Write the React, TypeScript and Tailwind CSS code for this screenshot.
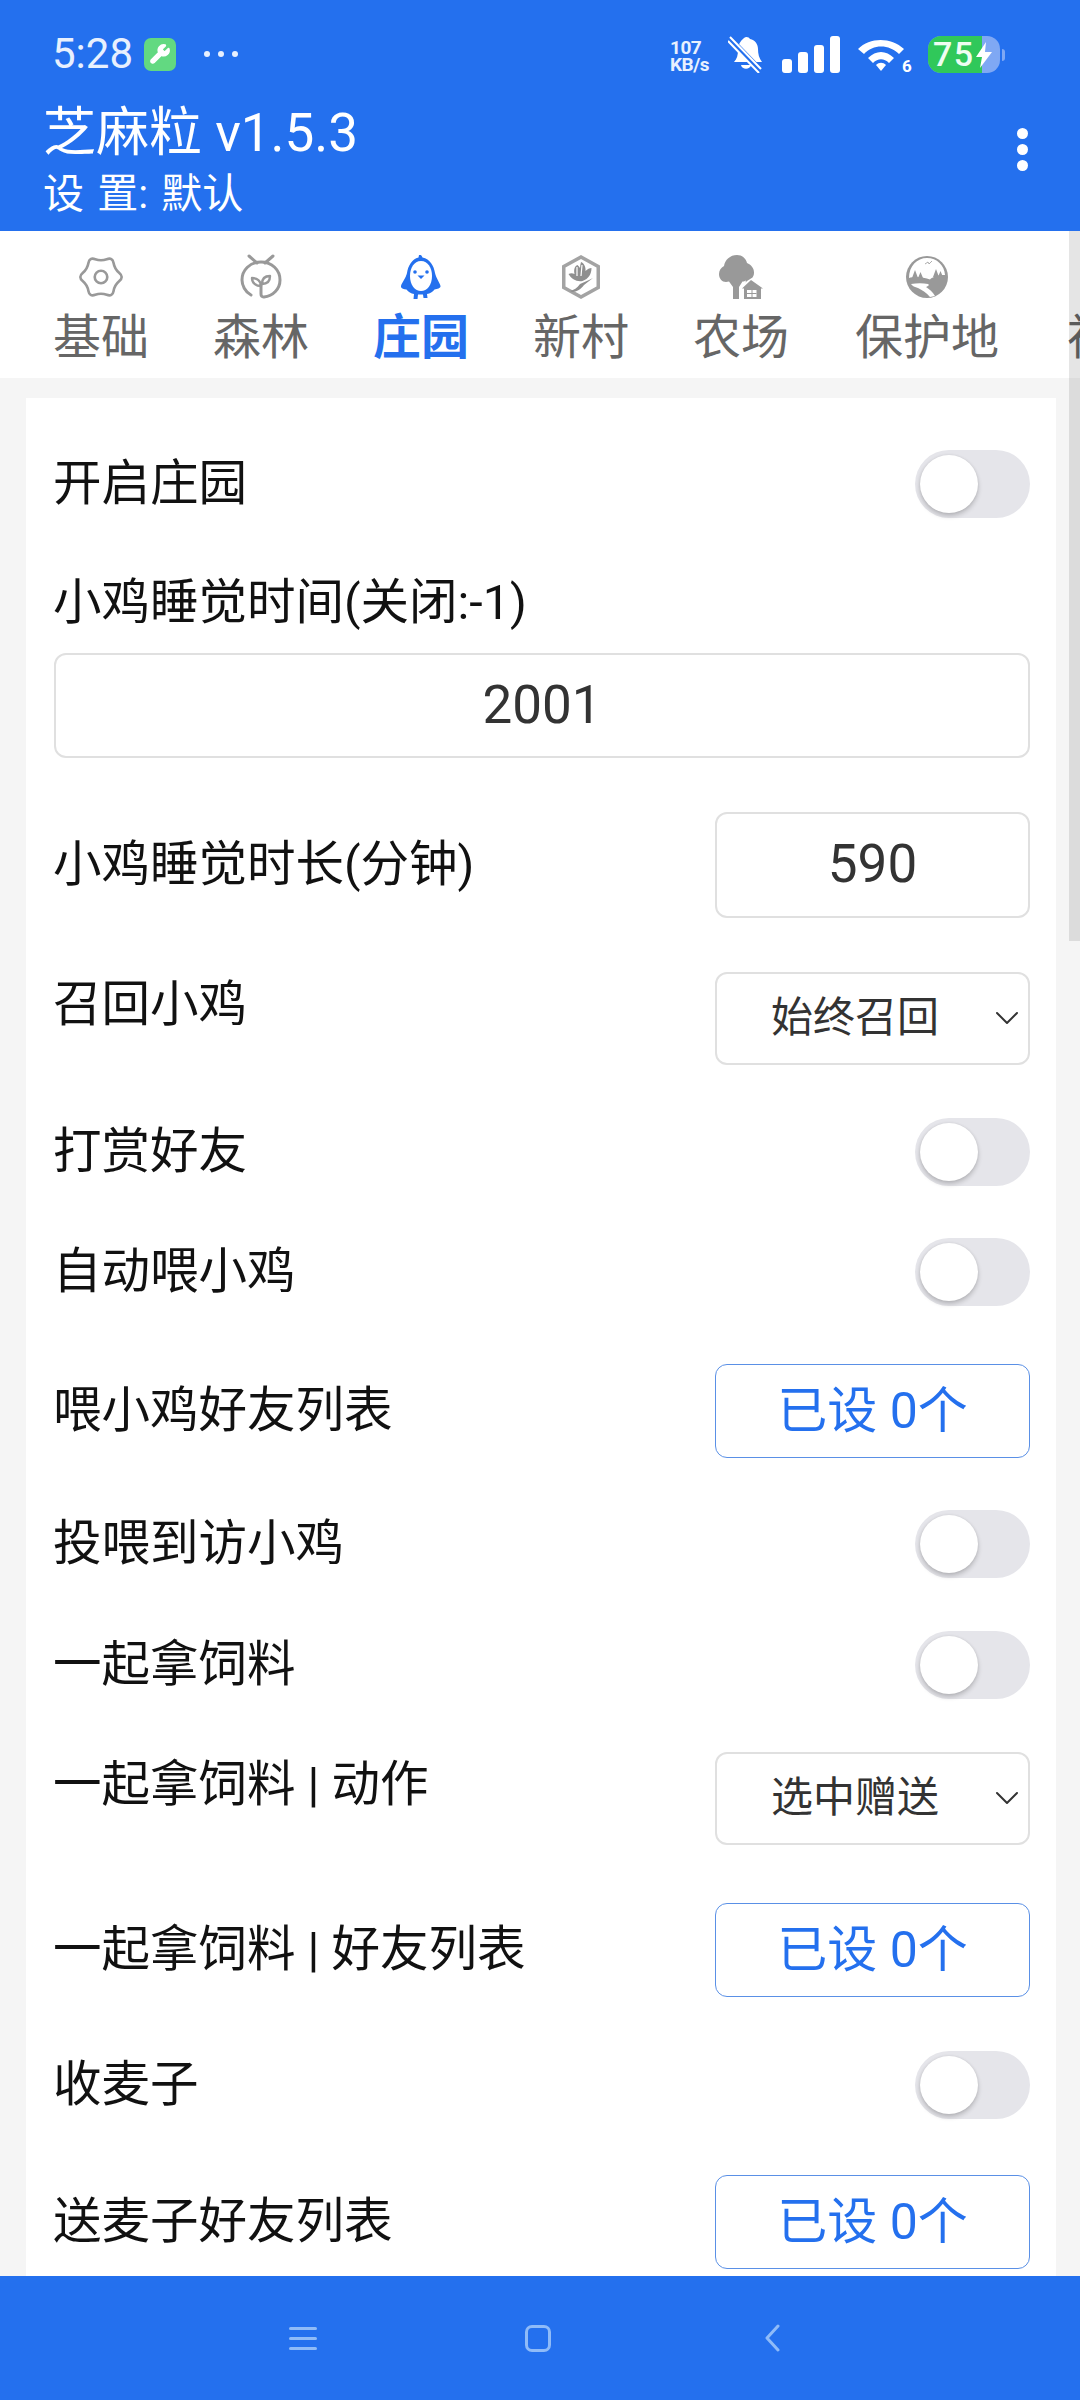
import type { ReactNode } from 'react'
import { ChevronDown, Wrench } from 'lucide-react'

const FONT = "font-['Roboto','Noto_Sans_CJK_SC',sans-serif]"

function GearIcon() {
  return (
    <svg width="44" height="44" viewBox="1 1 42 42" fill="none" stroke="#999" strokeWidth="2.5" strokeLinejoin="round">
      <path d="M27.500 5Q33 3 34 8.700Q35 14.500 39.500 18.250Q44 22 39.500 25.750Q35 29.500 34 35.300Q33 41 27.500 39Q22 37 16.500 39Q11 41 10 35.300Q9 29.500 4.500 25.750Q0 22 4.500 18.250Q9 14.500 10 8.700Q11 3 16.500 5Q22 7 27.500 5z" />
      <circle cx="22" cy="22" r="6" />
    </svg>
  )
}

function SproutIcon() {
  return (
    <svg width="44" height="46" viewBox="0 0 44 46" fill="none" stroke="#999" strokeWidth="3" strokeLinecap="round" strokeLinejoin="round">
      <path d="M10 2l8 7M34 2l-8 7" />
      <path d="M12 41C6 38 3 31 3 26c0-10 8-18 19-18s19 8 19 18c0 9-7 16-16 17-2 .2-3-1-3-3v-9" />
      <path d="M22 32c0-5-4-8-9-8 0 5 4 8 9 8zM23 30c0-5 3-8 8-8 0 5-3 8-8 8z" strokeWidth="2.400" />
    </svg>
  )
}

function ChickIcon() {
  return (
    <svg width="40" height="44" viewBox="0 0 40 44">
      <path d="M18 0c2-.5 3 1 3.500 2.500C29 4 33 11 34 18c1 5 5 10 5.500 13 .3 2.500-3 3-6 3.500-2 2.500-4.500 4-7.500 4.500l.5 4h-4l-.5-3.500h-5L16.500 44h-4l.5-5c-3-.5-5.500-2-7.500-4.500-3-.5-6-1-5.500-3.500C.5 28 5 23 6 18 7 11 11 4 17.500 2.500z" fill="#2470ee" />
      <path d="M20 6c7 0 11 7 11 15 0 9-5 15-11 15S9 30 9 21C9 13 13 6 20 6z" fill="#fff" />
      <circle cx="14" cy="17" r="1.800" fill="#2470ee" />
      <circle cx="26" cy="17" r="1.800" fill="#2470ee" />
      <path d="M16.500 20.500h7L20 24z" fill="#2470ee" />
    </svg>
  )
}

function FlowerIcon() {
  return (
    <svg width="38" height="44" viewBox="0 0 38 44">
      <path d="M19 0l19 10.500v23L19 44 0 33.500v-23z" fill="#a3a3a3" />
      <path d="M19 4l15.500 8.500v19L19 40 3.500 31.500v-19z" fill="#fff" />
      <path d="M19 7c3 1 5 5 4.500 9 2-2 4-3 6-3 0 6-3 11-9 13-6 1-11-2-14-7 2-1 4-1 6 0-1-4 0-8 3-9 1 1 2 2 2.500 3 0-2 .5-4 1-6z" fill="#8f8f8f" />
      <path d="M8 36c4-1 7-3 10-7l9-4 4-2-9 7c-3 4-7 7-12 7z" fill="#8f8f8f" />
      <path d="M15 12v9M20 10l-1 11" stroke="#fff" strokeWidth="1.200" />
    </svg>
  )
}

function TreeIcon() {
  return (
    <svg width="44" height="44" viewBox="0 0 44 44" fill="#999">
      <path d="M18 0c5 0 9 3.500 10 8 4 1.500 7 5 7 9.500 0 2-.5 3.500-1.500 5L28 26l-1.500 1.500 .5-2c-1 .5-2 1-3.500 1L20 32v12h-6V32l-4-5.500c-1 .3-2 .4-3 .4-4 0-7-3.500-7-8 0-3.500 2-6.500 5-8C6 5 11 0 18 0z" />
      <path d="M32 25l12 8.500h-2V44H25V33.500h-2z" />
      <path d="M28 35h9.500v7H28z" fill="#fff" />
      <path d="M32.500 35h1v7h-1zM28 38h9.500v1H28z" />
    </svg>
  )
}

function LandscapeIcon() {
  return (
    <svg width="44" height="44" viewBox="0 0 44 44">
      <circle cx="22" cy="22" r="21" fill="#999" />
      <path d="M22 3c10 0 17.500 7.500 18 17-6 0-13 2-15 4.500C19 22 9 21 4 23 4 11 12 3 22 3z" fill="#fff" />
      <path d="M7 23l3-8 3 8zM13 23l2.500-6 2.500 6zM28 22l3-8 3 8zM33 22l2.500-6 2.500 6z" fill="#999" />
      <path d="M20 9l3-2 1 2 3-3" stroke="#999" strokeWidth=".8" fill="none" />
      <path d="M6 29c6-1 12-1 17 0 2 1 0 2-2 3 3 2 7 5 9 9l-5 1c-3-4-8-7-12-9-3-1-6-2-7-4z" fill="#fff" />
    </svg>
  )
}

const TABS: { label: string; icon: ReactNode; active?: boolean; w: string }[] = [
  { label: '基础', icon: <GearIcon />, w: 'w-[160px]' },
  { label: '森林', icon: <SproutIcon />, w: 'w-[160px]' },
  { label: '庄园', icon: <ChickIcon />, active: true, w: 'w-[160px]' },
  { label: '新村', icon: <FlowerIcon />, w: 'w-[160px]' },
  { label: '农场', icon: <TreeIcon />, w: 'w-[160px]' },
  { label: '保护地', icon: <LandscapeIcon />, w: 'w-[212px]' },
  { label: '神奇物种', icon: null, w: 'w-[260px]' },
]

function StatusBar() {
  return (
    <div className="flex h-[73px] items-end justify-between pl-[52px] pr-[75px]">
      <div className="flex items-center">
        <span className="text-[42px] leading-[38px] text-[#e8f0fe]">5:28</span>
        <span className="ml-[11px] flex h-[33px] w-[32px] items-center justify-center rounded-[7px] bg-[#62d981]">
          <Wrench size={22} fill="#fff" stroke="#fff" strokeWidth={1.5} />
        </span>
        <span className="ml-[28px] flex gap-[8px]">
          <i className="h-[6px] w-[6px] rounded-full bg-[#e8f0fe]" />
          <i className="h-[6px] w-[6px] rounded-full bg-[#e8f0fe]" />
          <i className="h-[6px] w-[6px] rounded-full bg-[#e8f0fe]" />
        </span>
      </div>
      <div className="flex items-end">
        <div className="flex w-[50px] flex-col text-[19px] font-bold leading-[17px] tracking-[-0.5px] text-[#e8f0fe]">
          <span>107</span>
          <span className="whitespace-nowrap">KB/s</span>
        </div>
        <svg className="ml-[8px]" width="36" height="37" viewBox="0 0 36 37" fill="#fff">
          <path d="M16 2c2-2 5-1 6 1 5 1 8 5 8 10 0 5 1 9 4 13H6c3-3 4-7 4-12 0-5 2-9 6-12z" />
          <path d="M13 29h10c-1 5-9 5-10 0z" />
          <path d="M2 3l31 32" stroke="#2470ee" strokeWidth="6" />
          <path d="M2 1l31 32M0 5l31 32" stroke="#fff" strokeWidth="2" />
        </svg>
        <div className="ml-[18px] flex items-end gap-[6px]">
          <i className="h-[14px] w-[10px] rounded-[3px] bg-white" />
          <i className="h-[21px] w-[10px] rounded-[3px] bg-white" />
          <i className="h-[28px] w-[10px] rounded-[3px] bg-white" />
          <i className="h-[37px] w-[10px] rounded-[3px] bg-white" />
        </div>
        <svg className="ml-[18px]" width="56" height="37" viewBox="0 0 56 37" fill="#fff">
          <path d="M0 13C12 1 33 1 46 13l-5 5C31 8 15 8 6 18z" />
          <path d="M10 22c8-8 18-8 26 0l-5 5c-5-5-11-5-16 0z" />
          <path d="M18 29c3-3 7-3 10 0l-5 6z" />
          <text x="44" y="36" fontSize="17" fontWeight="700" fontFamily="Roboto">6</text>
        </svg>
        <div className="relative ml-[14px] flex h-[37px] w-[72px] items-center overflow-hidden rounded-[13px] bg-[#7fa8f4]">
          <div className="h-full w-[54px] bg-[#30c85a]" />
          <span className="absolute left-[5px] text-[34px] font-medium leading-[37px] tracking-[1.5px] text-[#eefdf2]">75</span>
          <svg className="absolute left-[48px]" width="16" height="26" viewBox="0 0 16 26" fill="#fff">
            <path d="M10 0L0 15h6l-2 11 12-16H9z" />
          </svg>
        </div>
        <i className="mb-[12px] ml-[2px] h-[12px] w-[3px] rounded-r-full bg-[#7fa8f4]" />
      </div>
    </div>
  )
}

function Header() {
  return (
    <div className="h-[231px] bg-[#2470ee] text-white">
      <StatusBar />
      <div className="relative pl-[43px] pt-[31px]">
        <div className="whitespace-nowrap text-[53px] leading-[58px]">芝麻粒 v1.5.3</div>
        <div className="mt-[9px] whitespace-pre text-[41px] leading-[46px] [word-spacing:3px]">设 置: 默认</div>
        <div className="absolute right-[33px] top-[55px] flex w-[50px] flex-col items-center gap-[5px]">
          <i className="h-[11px] w-[11px] rounded-full bg-white" />
          <i className="h-[11px] w-[11px] rounded-full bg-white" />
          <i className="h-[11px] w-[11px] rounded-full bg-white" />
        </div>
      </div>
    </div>
  )
}

function TabBar() {
  return (
    <div className="flex h-[147px] overflow-hidden bg-white pl-[21px]">
      {TABS.map(t => (
        <div key={t.label} className={`flex shrink-0 flex-col items-center ${t.w}`}>
          <div className="mt-[24px] flex h-[44px] items-center justify-center">{t.icon}</div>
          <span className={t.active ? 'mt-[9px] whitespace-nowrap text-[48px] font-bold leading-[60px] text-[#2470ee]' : 'mt-[9px] whitespace-nowrap text-[48px] leading-[60px] text-[#666]'}>
            {t.label}
          </span>
        </div>
      ))}
    </div>
  )
}

function Label({ children, className = '' }: { children: ReactNode; className?: string }) {
  return <span className={`whitespace-nowrap text-[48.5px] leading-[66px] text-[#111] ${className}`}>{children}</span>
}

function Toggle() {
  return (
    <div className="relative h-[68px] w-[115px] rounded-full bg-[#e5e5ea]">
      <div className="absolute left-[5px] top-[5px] h-[58px] w-[58px] rounded-full bg-white shadow-[0_3px_5px_rgba(0,0,0,0.2),0_0_3px_rgba(0,0,0,0.08)]" />
    </div>
  )
}

function ToggleRow({ label, mt }: { label: string; mt: string }) {
  return (
    <div className={`flex items-center justify-between ${mt}`}>
      <Label>{label}</Label>
      <Toggle />
    </div>
  )
}

function NumberBox({ value, className }: { value: string; className: string }) {
  return (
    <div className={`flex items-center justify-center rounded-[12px] border-2 border-[#e0e0e0] text-[53px] text-[#333] ${className}`}>
      {value}
    </div>
  )
}

function SelectRow({ label, value, mt }: { label: string; value: string; mt: string }) {
  return (
    <div className={`flex items-start justify-between ${mt}`}>
      <Label>{label}</Label>
      <div className="relative h-[93px] w-[315px] overflow-hidden rounded-[12px] border-2 border-[#e0e0e0]">
        <div className="h-[62px] overflow-hidden pl-[54px] pt-[20px] text-[42px] leading-[48px] text-[#333]">{value}</div>
        <ChevronDown className="absolute right-[1px] top-[24px]" size={40} strokeWidth={1.2} color="#333" />
      </div>
    </div>
  )
}

function FriendsRow({ label, mt }: { label: string; mt: string }) {
  return (
    <div className={`flex items-center justify-between ${mt}`}>
      <Label>{label}</Label>
      <div className="flex h-[94px] w-[315px] items-center justify-center rounded-[12px] border border-[#5a90e6] text-[50px] text-[#2470ee]">
        已设 0个
      </div>
    </div>
  )
}

function NavBar() {
  return (
    <div className="relative flex h-[124px] items-center bg-[#2470ee] pl-[289px]">
      <div className="flex w-[28px] flex-col gap-[7px]">
        <i className="h-[3px] rounded-full bg-[#8fbbf8]" />
        <i className="h-[3px] rounded-full bg-[#8fbbf8]" />
        <i className="h-[3px] rounded-full bg-[#8fbbf8]" />
      </div>
      <div className="ml-[208px] h-[27px] w-[26px] rounded-[7px] border-[3px] border-[#8fbbf8]" />
      <svg className="ml-[213px]" width="17" height="28" viewBox="0 0 17 28" fill="none" stroke="#8fbbf8" strokeWidth="3" strokeLinecap="round" strokeLinejoin="round">
        <path d="M14 2L3 14l11 12" />
      </svg>
    </div>
  )
}

export default function App() {
  return (
    <div className={`relative flex h-[2400px] w-[1080px] flex-col overflow-hidden bg-[#f5f5f5] ${FONT}`}>
      <Header />
      <TabBar />
      <div className="h-[1898px] overflow-hidden pl-[26px] pr-[24px] pt-[20px]">
        <div className="h-[1900px] bg-white pl-[27px] pr-[26px] pt-[52px]">
          <ToggleRow label="开启庄园" mt="mt-0" />
          <div className="mt-[52px]">
            <Label className="block">小鸡睡觉时间(关闭:-1)</Label>
            <NumberBox value="2001" className="ml-[1px] mt-[17px] h-[105px]" />
          </div>
          <div className="mt-[54px] flex items-center justify-between">
            <Label>小鸡睡觉时长(分钟)</Label>
            <NumberBox value="590" className="h-[106px] w-[315px]" />
          </div>
          <SelectRow label="召回小鸡" value="始终召回" mt="mt-[54px]" />
          <ToggleRow label="打赏好友" mt="mt-[53px]" />
          <ToggleRow label="自动喂小鸡" mt="mt-[52px]" />
          <FriendsRow label="喂小鸡好友列表" mt="mt-[58px]" />
          <ToggleRow label="投喂到访小鸡" mt="mt-[52px]" />
          <ToggleRow label="一起拿饲料" mt="mt-[53px]" />
          <SelectRow label="一起拿饲料 | 动作" value="选中赠送" mt="mt-[53px]" />
          <FriendsRow label="一起拿饲料 | 好友列表" mt="mt-[58px]" />
          <ToggleRow label="收麦子" mt="mt-[54px]" />
          <FriendsRow label="送麦子好友列表" mt="mt-[56px]" />
        </div>
      </div>
      <NavBar />
      {/* overlay scrollbar */}
      <div className="absolute right-0 top-[231px] h-[710px] w-[11px] bg-black/10" />
    </div>
  )
}
